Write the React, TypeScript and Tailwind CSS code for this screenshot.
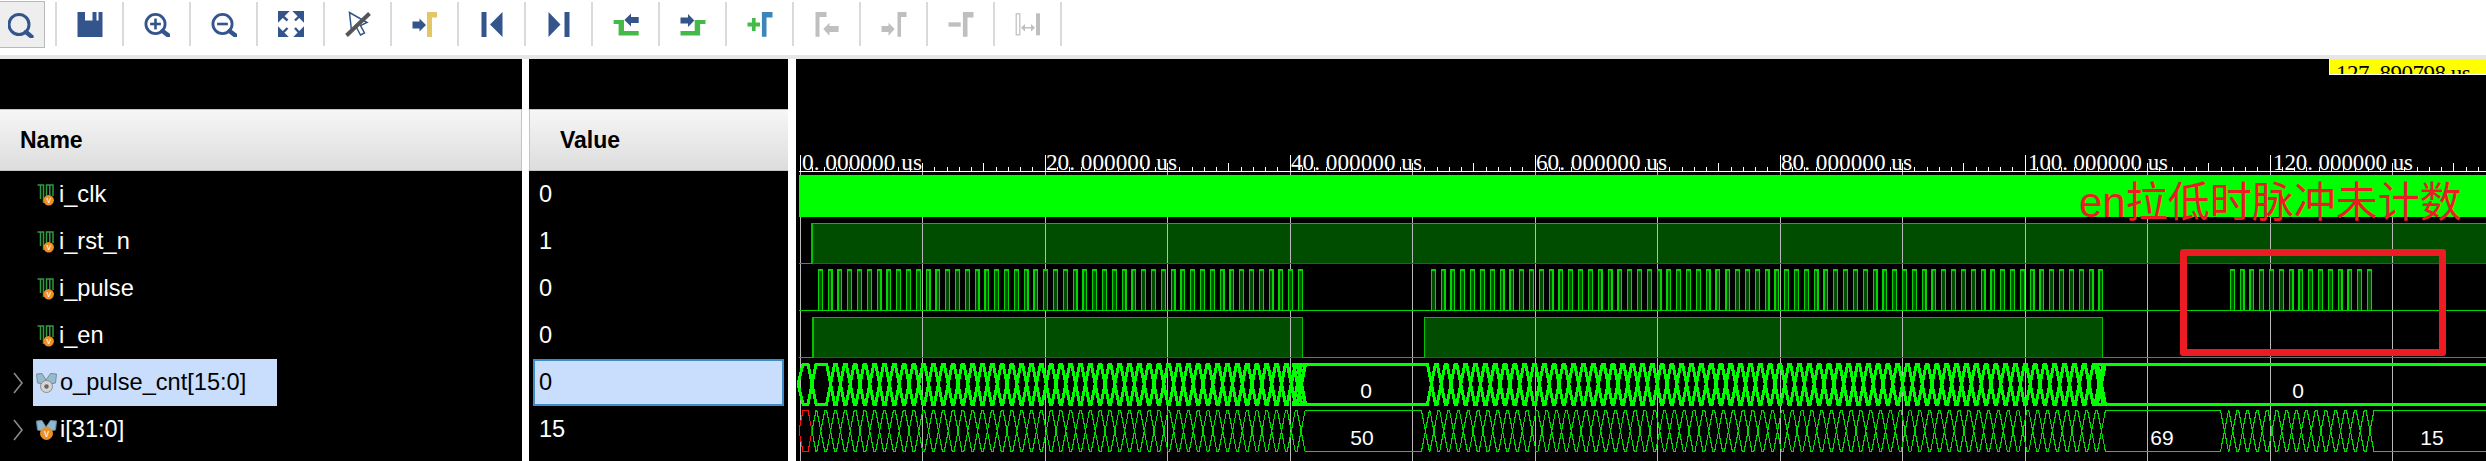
import React from "react";

const BLUE = "#34558b";
const GREY = "#bfbfbf";

function Ico({ children }: { children: React.ReactNode }) {
  return (
    <svg width="26" height="26" viewBox="0 0 26 26" className="shrink-0">
      {children}
    </svg>
  );
}

function Gamma({ x, w, color }: { x: number; w: number; color: string }) {
  return <path d={`M${x} 1H${x + w}V6.5H${x + 4.6}V25.7H${x}Z`} fill={color} />;
}

function Lens({ cx, minus, plus }: { cx: number; minus?: boolean; plus?: boolean }) {
  return (
    <g fill="none" stroke={BLUE}>
      <circle cx={cx} cy="13" r="9.6" strokeWidth="2.8" />
      <path d={`M${cx + 7} 20L${cx + 13} 24.6`} strokeWidth="4.4" strokeLinecap="round" />
      {(minus || plus) && <path d={`M${cx - 5.4} 13H${cx + 5.4}`} strokeWidth="2.6" />}
      {plus && <path d={`M${cx} 7.6V18.4`} strokeWidth="2.6" />}
    </g>
  );
}

const toolbarIcons: React.ReactNode[] = [
  <path key="s" fillRule="evenodd" d="M0.5 1H25.5V26H0.5ZM8 1V9.5H15.5V1ZM19.5 1V9.5H21.5V1Z" fill={BLUE} />,
  <Lens key="zi" cx={11.5} plus />,
  <Lens key="zo" cx={11.5} minus />,
  <g key="fit" fill={BLUE} stroke={BLUE}>
    <path d="M0.5 1H9L0.5 9.5Z M3.5 4L9.5 9.5" strokeWidth="2.4" />
    <path d="M25.5 1H17L25.5 9.5Z M22.5 4L17 9.5" strokeWidth="2.4" />
    <path d="M0.5 26H9L0.5 17.5Z M3.5 23L9.5 17" strokeWidth="2.4" />
    <path d="M25.5 26H17L25.5 17.5Z M22.5 23L17 17" strokeWidth="2.4" />
  </g>,
  <g key="snap">
    <path d="M4.5 1.5L22 11.5L15.5 14.5L19.5 22L15.5 24L11.5 16.5L6.5 20Z" fill="white" stroke={BLUE} strokeWidth="1.5" />
    <path d="M1.5 24.5L24.5 2.5" stroke="#555555" strokeWidth="4" />
  </g>,
  <g key="gold">
    <path d="M0.5 10.5H7.5V7.5L14 14L7.5 20.5V17.5H0.5Z" fill={BLUE} />
    <path d="M15 1H25V6.5H20V26H15Z" fill="#e3c766" />
  </g>,
  <g key="prev" fill={BLUE}>
    <rect x="2.5" y="1" width="5" height="25" />
    <path d="M23.5 1L11 13.5L23.5 26Z" />
  </g>,
  <g key="next" fill={BLUE}>
    <path d="M2.5 1L14.5 13.5L2.5 26Z" />
    <rect x="18.5" y="1" width="5" height="25" />
  </g>,
  <g key="gl">
    <path d="M0.6 9H11V20H25.7V24.6H5.6V13H0.6Z" fill="#45b949" />
    <path d="M11.4 9L18 2.5V6H25.7V12H18V15.5Z" fill={BLUE} />
  </g>,
  <g key="gr">
    <path d="M0.5 20H14.7V9H25.5V13H20.1V24.6H0.5Z" fill="#45b949" />
    <path d="M14.4 9.5L8 3V6.5H0.5V12.5H8V16Z" fill={BLUE} />
  </g>,
  <g key="plus">
    <path d="M5 7H8.6V11.6H13V15.4H8.6V20H5V15.4H0.5V11.6H5Z" fill="#45b949" />
    <Gamma x={14.9} w={10.6} color="#3d85b8" />
  </g>,
  <g key="d1" fill={GREY}>
    <path d="M1.5 1H12.5V6H5.5V25.7H1.5Z" />
    <path d="M9.3 18L15.5 11.7V15H24.6V21H15.5V24.7Z" />
  </g>,
  <g key="d2" fill={GREY}>
    <path d="M0.5 15H7.5V11.7L13.7 18L7.5 24.7V21H0.5Z" />
    <path d="M16.5 1H25.5V6H20V25.7H16.5Z" />
  </g>,
  <g key="d3" fill={GREY}>
    <rect x="0.5" y="11.3" width="12.2" height="4.4" />
    <Gamma x={14.9} w={10.6} color={GREY} />
  </g>,
  <g key="swap">
    <rect x="1.2" y="2.8" width="3.6" height="21" fill="white" stroke={GREY} strokeWidth="1.2" />
    <rect x="21" y="2.3" width="4" height="22" fill={GREY} />
    <path d="M6 16.7L10 13V15.9H16V13L20 16.7L16 20.4V17.5H10V20.4Z" fill={GREY} />
  </g>,
];

function Toolbar() {
  return (
    <div className="h-[55px] flex items-start bg-white">
      <button className="mt-px w-[45px] h-[47px] flex items-center justify-center pr-[3px] bg-[#eeeeee] border border-l-0 border-[#b9b9b9]">
        <Ico>
          <circle cx="11" cy="12.5" r="10" fill="none" stroke={BLUE} strokeWidth="3" />
          <path d="M18 20L23.5 24.6" stroke={BLUE} strokeWidth="4.4" strokeLinecap="round" />
        </Ico>
      </button>
      <div className="ml-[10px] mt-[2px] flex border-r-2 border-[#dadada]">
        {toolbarIcons.map((ic, i) => (
          <div key={i} className="w-[67px] h-[44px] pt-[9px] flex justify-center border-l-2 border-[#dadada]">
            <Ico>{ic}</Ico>
          </div>
        ))}
      </div>
    </div>
  );
}

function ScalarIcon() {
  return (
    <svg width="20" height="22" viewBox="0 0 20 22" className="shrink-0">
      <path d="M1.5 1H7.5V19M4.5 1V15" fill="none" stroke="#2f9a42" strokeWidth="1.5" />
      <path d="M10.5 12V1H17V12M13.8 1V11" fill="none" stroke="#2f9a42" strokeWidth="1.5" />
      <circle cx="12.7" cy="16.2" r="5.2" fill="#ee8f24" />
      <text x="12.7" y="19.2" textAnchor="middle" fontSize="9" fill="white" fontFamily="Liberation Sans, sans-serif">v</text>
    </svg>
  );
}

function BusIcon({ grey }: { grey?: boolean }) {
  return (
    <svg width="21" height="22" viewBox="0 0 21 22" className="shrink-0">
      <path d="M0.5 2L6 1.5L10 8L14.5 1.5L20.5 2L19.5 11L13 12H8L1.5 11Z" fill={grey ? "#95bbce" : "#8fb9cf"} stroke={grey ? "#7d8a92" : "#6c8794"} strokeWidth="1" />
      <circle cx="10.5" cy="14.5" r="6" fill={grey ? "#d5d5d5" : "#ee8f24"} stroke={grey ? "#8b8b8b" : "#ee8f24"} strokeWidth="1" />
      {grey ? (
        <circle cx="10.5" cy="14.5" r="2.2" fill="#666666" />
      ) : (
        <text x="10.5" y="18" textAnchor="middle" fontSize="10" fill="white" fontFamily="Liberation Sans, sans-serif">v</text>
      )}
    </svg>
  );
}

const rows = [
  { name: "i_clk", value: "0" },
  { name: "i_rst_n", value: "1" },
  { name: "i_pulse", value: "0" },
  { name: "i_en", value: "0" },
  { name: "o_pulse_cnt[15:0]", value: "0", bus: true, selected: true },
  { name: "i[31:0]", value: "15", bus: true },
];

function Header({ title, className }: { title: string; className: string }) {
  return (
    <div className={`h-[62px] flex items-center font-bold text-[23px] text-black bg-gradient-to-b from-[#f6f6f6] to-[#dddddd] border-y border-[#c4c4c4] ${className}`}>
      {title}
    </div>
  );
}

function Panels() {
  return (
    <div className="w-[788px] flex bg-white text-[23.6px] font-['Liberation_Sans',sans-serif]">
      <div className="w-[522px] bg-black pt-[50px] h-full">
        <Header title="Name" className="pl-[20px] border-r" />
        {rows.map((r) => (
          <div key={r.name} className="h-[47px] flex text-white">
            <div className="w-[33px] flex items-center justify-center pl-[2px]">
              {r.bus && (
                <svg width="12" height="22" viewBox="0 0 12 22">
                  <path d="M2 1L10 11L2 21" fill="none" stroke="#8a8a8a" strokeWidth="1.6" />
                </svg>
              )}
            </div>
            <div className={`flex items-center w-[244px] pl-[3px] gap-[3px] ${r.selected ? "bg-[#c9ddfd] text-black" : ""}`}>
              {r.bus ? <BusIcon grey={r.selected} /> : <ScalarIcon />}
              <span className="whitespace-nowrap">{r.name}</span>
            </div>
          </div>
        ))}
      </div>
      <div className="w-[259px] ml-[7px] bg-black pt-[50px] h-full">
        <Header title="Value" className="pl-[30px] border-l" />
        {rows.map((r) =>
          r.selected ? (
            <div key={r.name} className="h-[47px] mx-[4px] pl-[4px] flex items-center bg-[#c9ddfd] border-2 border-[#3d8ccb] text-black">
              {r.value}
            </div>
          ) : (
            <div key={r.name} className="h-[47px] pl-[10px] flex items-center text-white">
              {r.value}
            </div>
          )
        )}
      </div>
    </div>
  );
}

const series = (start: number, n: number, step: number) => Array.from({ length: n }, (_, i) => start + i * step);
const g1 = series(818.3, 50, 9.802);
const g2 = series(1431.4, 69, 9.817);
const g3 = series(2230.3, 15, 9.8);
const RIGHT = 2490;

function busPaths(x0: number, xHexTop: number, times: number[], top: number, bot: number, w: number) {
  const mid = (top + bot) / 2;
  let a = `M${x0} ${mid}L${xHexTop} ${top}`;
  let b = `M${x0} ${mid}L${xHexTop} ${bot}`;
  let up = true;
  for (const t of times) {
    const ya = up ? top : bot;
    const yb = up ? bot : top;
    a += `L${t} ${ya}L${t + w} ${yb}`;
    b += `L${t} ${yb}L${t + w} ${ya}`;
    up = !up;
  }
  a += `L${RIGHT} ${up ? top : bot}`;
  b += `L${RIGHT} ${up ? bot : top}`;
  return a + b;
}

const rulerTicks = Array.from({ length: 139 }, (_, i) => i);

function RulerLabel({ x, text, w }: { x: number; text: string; w: number }) {
  return (
    <text x={x} y="170" fontSize="23" fill="white" fontFamily="'Liberation Serif', serif" textLength={w} lengthAdjust="spacingAndGlyphs">
      {text}
    </text>
  );
}

function Waves() {
  const major = series(799.5, 14, 122.5);
  const pulses = [...g1, ...g2, ...g3];
  const W = 8;
  const shift = (list: number[], d: number) => list.map((p) => p + d);
  const bus1 = busPaths(798, 803, [808, ...shift(g1, -1.5).slice(1), 1293.5, 1297.5, ...shift(g2, -4), g2[68] - 1.5], 364, 404, W);
  const bus2 = busPaths(812, 816, [...shift(g1, -1.5), 1421.4, ...shift(g2, -1.5), 2220.5, ...shift(g3, -1.5)], 410.5, 451.5, W);
  return (
    <svg width="1690" height="402" viewBox="796 59 1690 402" className="block">
      {/* fills */}
      <rect x="812" y="223" width="1680" height="40" fill="#004d00" />
      <rect x="813" y="317" width="490" height="40" fill="#004d00" />
      <rect x="1425" y="317" width="678" height="40" fill="#004d00" />
      <g shapeRendering="crispEdges">
        {/* grid */}
        {major.map((x) => (
          <line key={x} x1={Math.round(x) + 0.5} x2={Math.round(x) + 0.5} y1="172" y2="461" stroke="#b9b9b9" />
        ))}
        {/* ruler */}
        <line x1="799" x2="2486" y1="171.5" y2="171.5" stroke="white" />
        {rulerTicks.map((i) => {
          const x = Math.round(799.5 + i * 12.25) + 0.5;
          const len = i % 20 === 0 ? 16 : i % 5 === 0 ? 8 : 4;
          return <line key={i} x1={x} x2={x} y1={171 - len} y2="171" stroke="white" />;
        })}
      </g>
      <RulerLabel x={802} text="0. 000000 us" w={120} />
      <RulerLabel x={1046} text="20. 000000 us" w={131} />
      <RulerLabel x={1291} text="40. 000000 us" w={131} />
      <RulerLabel x={1536} text="60. 000000 us" w={131} />
      <RulerLabel x={1781} text="80. 000000 us" w={131} />
      <RulerLabel x={2028} text="100. 000000 us" w={140} />
      <RulerLabel x={2273} text="120. 000000 us" w={140} />
      {/* clk */}
      <rect x="799" y="175" width="1690" height="42" fill="#00ff00" />
      <g shapeRendering="crispEdges" fill="none">
        {/* rst */}
        <path d="M799 263.5H2486" stroke="#007a00" />
        <path d="M799 263.5H812V223.5H2490" stroke="#00c000" strokeWidth="1.5" />
        {/* pulses */}
        <path d="M799 310.5H2486" stroke="#00d800" strokeWidth="1.2" />
        {pulses.map((p) => (
          <path key={p} d={`M${p} 310V270H${p + 3.8}V310`} fill="#004d00" stroke="#00d800" strokeWidth="1.2" />
        ))}
        {/* en */}
        <path d="M799 357.5H2486" stroke="#007a00" />
        <path d="M799 357.5H813V317.5H1302.5V357.5H1424.7V317.5H2102.5V357.5H2490" stroke="#00c000" strokeWidth="1.5" />
        {/* buses */}
        <path d={bus1} stroke="#00ff00" strokeWidth="3" />
        <path d={bus2} stroke="#00e000" strokeWidth="1.1" />
        <path d="M799 431L803 410.5H808L812 431L808 451.5H803Z" stroke="#ff1010" strokeWidth="1.1" fill="#000000" />
      </g>
      <g fill="white" fontSize="21" fontFamily="'Liberation Sans', sans-serif" textAnchor="middle">
        <text x="1366" y="398">0</text>
        <text x="2298" y="398">0</text>
        <text x="1362" y="444.5">50</text>
        <text x="2162" y="444.5">69</text>
        <text x="2432" y="444.5">15</text>
      </g>
    </svg>
  );
}

export default function App() {
  return (
    <div className="w-[2486px] h-[461px] bg-white overflow-hidden flex flex-col">
      <Toolbar />
      <div className="h-[4px] bg-[#e6e6e6]" />
      <div className="h-[402px] flex">
        <Panels />
        <div className="ml-[8px] w-[1690px] relative bg-black overflow-hidden">
          <Waves />
          {/* time cursor label */}
          <div className="absolute left-[1533px] top-0 w-[157px] h-[16px] bg-[#ffff00] border-l border-b border-white overflow-hidden">
            <span className="block mt-[2px] ml-[6px] whitespace-nowrap text-[23px] leading-[26px] text-black font-['Liberation_Serif',serif] tracking-[-0.5px]">
              127. 890798 us
            </span>
          </div>
          {/* annotation */}
          <div className="absolute left-[1283px] top-[114px] whitespace-nowrap text-[42px] leading-[60px] text-[#ed1c24] font-['Liberation_Sans','Noto_Sans_CJK_SC',sans-serif]">
            en拉低时脉冲未计数
          </div>
          <div className="absolute left-[1384px] top-[190px] w-[266px] h-[107px] border-[7px] border-[#ed1c24] rounded-[3px]" />
        </div>
      </div>
    </div>
  );
}
